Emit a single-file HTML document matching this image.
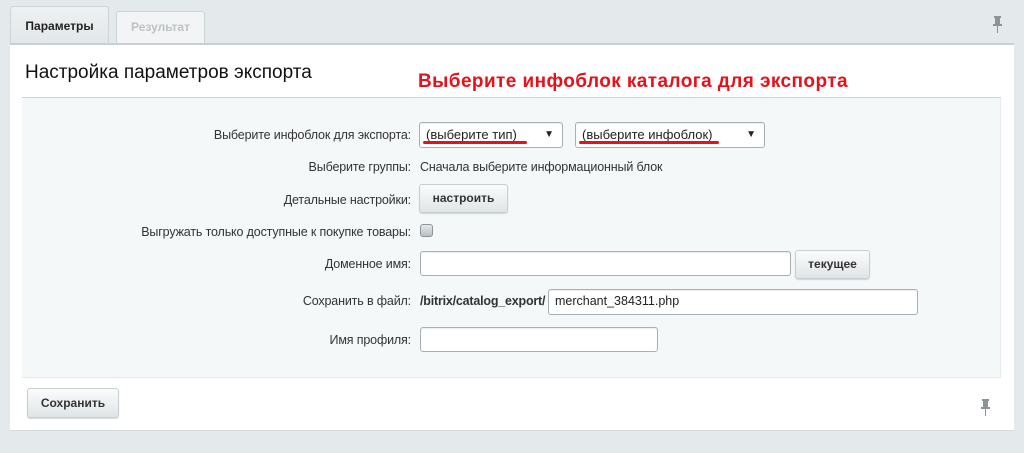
<!DOCTYPE html>
<html><head><meta charset="utf-8"><style>
*{box-sizing:border-box;margin:0;padding:0}
body{width:1024px;height:453px;background:#e4eaec;font-family:"Liberation Sans",Arial,sans-serif;position:relative;overflow:hidden;color:#222}
.a{position:absolute}
.tab{position:absolute;border:1px solid #cdd3d6;border-bottom:none;border-radius:3px 3px 0 0;font-size:12px;font-weight:bold;text-align:center}
.lbl{position:absolute;right:613px;font-size:12.5px;letter-spacing:-0.15px;color:#333;text-align:right;white-space:nowrap}
.inp{position:absolute;background:#fff;border:1px solid #a9b0b3;border-radius:3px;height:25px;font-size:13px;padding:4px 6px;box-shadow:inset 0 1px 1px rgba(0,0,0,.08)}
.btn{position:absolute;border:1px solid #c8cfd1;border-radius:3px;background:linear-gradient(#fbfcfc,#dfe5e7);font-size:12px;font-weight:bold;color:#333;text-align:center;box-shadow:0 1px 1px rgba(0,0,0,.15)}
.red{position:absolute;height:3px;background:#e8101a;border-radius:2px}
</style></head><body>
<div class="tab" style="left:10px;top:6px;width:99px;height:38px;background:linear-gradient(#eef1f2,#e2e7e9);line-height:38px;color:#222">Параметры</div>
<div class="tab" style="left:116px;top:11px;width:89px;height:33px;background:#f2f4f5;line-height:30px;color:#bcc2c5">Результат</div>
<svg class="a" style="left:991px;top:15px" width="14" height="20"><rect x="3" y="1" width="7" height="2" fill="#8b9598"/><rect x="4" y="3" width="5" height="6" fill="#8b9598"/><rect x="2" y="9" width="9" height="2" fill="#8b9598"/><rect x="6" y="11" width="1" height="7" fill="#8b9598"/></svg>
<div class="a" style="left:10px;top:43px;width:1004px;height:388px;background:#fff;border-top:2px solid #c9d0d3;border-bottom:1px solid #d5dbdd"></div>
<div class="a" style="left:25px;top:62px;font-size:19px;color:#111">Настройка параметров экспорта</div>
<div class="a" style="left:418px;top:71px;font-size:19px;font-weight:bold;color:#e8101a;letter-spacing:0.42px">Выберите инфоблок каталога для экспорта</div>
<div class="a" style="left:22px;top:97px;width:979px;height:281px;background:#f5f8f9;border-top:1px solid #cdd4d7;border-bottom:1px solid #e3e8ea;border-right:1px solid #e6ebec"></div>

<div class="lbl" style="top:128px">Выберите инфоблок для экспорта:</div>
<div class="inp" style="left:419px;top:122px;width:144px;height:26px">(выберите тип)<span style="position:absolute;right:8px;top:6px;font-size:10px">▼</span></div>
<div class="red" style="left:423px;top:141px;width:104px"></div>
<div class="inp" style="left:575px;top:122px;width:190px;height:26px">(выберите инфоблок)<span style="position:absolute;right:8px;top:6px;font-size:10px">▼</span></div>
<div class="red" style="left:579px;top:141px;width:140px"></div>

<div class="lbl" style="top:160px">Выберите группы:</div>
<div class="a" style="left:420px;top:160px;font-size:12.5px;letter-spacing:-0.15px;color:#333">Сначала выберите информационный блок</div>

<div class="lbl" style="top:193px">Детальные настройки:</div>
<div class="btn" style="left:419px;top:184px;width:89px;height:29px;line-height:27px">настроить</div>

<div class="lbl" style="top:225px">Выгружать только доступные к покупке товары:</div>
<div class="a" style="left:420px;top:224px;width:13px;height:13px;border:1px solid #8d9598;border-radius:3px;background:linear-gradient(#e4e8ea,#b9c0c3)"></div>

<div class="lbl" style="top:257px">Доменное имя:</div>
<div class="inp" style="left:420px;top:251px;width:371px;height:25px"></div>
<div class="btn" style="left:795px;top:250px;width:75px;height:29px;line-height:27px">текущее</div>

<div class="lbl" style="top:294px">Сохранить в файл:</div>
<div class="a" style="left:420px;top:294px;font-size:12.5px;letter-spacing:-0.2px;font-weight:bold;color:#333;white-space:nowrap">/bitrix/catalog_export/</div>
<div class="inp" style="left:548px;top:289px;width:370px;height:26px;font-size:12.5px">merchant_384311.php</div>

<div class="lbl" style="top:333px">Имя профиля:</div>
<div class="inp" style="left:420px;top:327px;width:238px;height:25px"></div>

<div class="btn" style="left:27px;top:388px;width:92px;height:30px;line-height:28px">Сохранить</div>
<svg class="a" style="left:979px;top:398px" width="14" height="20"><rect x="3" y="1" width="7" height="2" fill="#8b9598"/><rect x="4" y="3" width="5" height="6" fill="#8b9598"/><rect x="2" y="9" width="9" height="2" fill="#8b9598"/><rect x="6" y="11" width="1" height="7" fill="#8b9598"/></svg>
</body></html>
